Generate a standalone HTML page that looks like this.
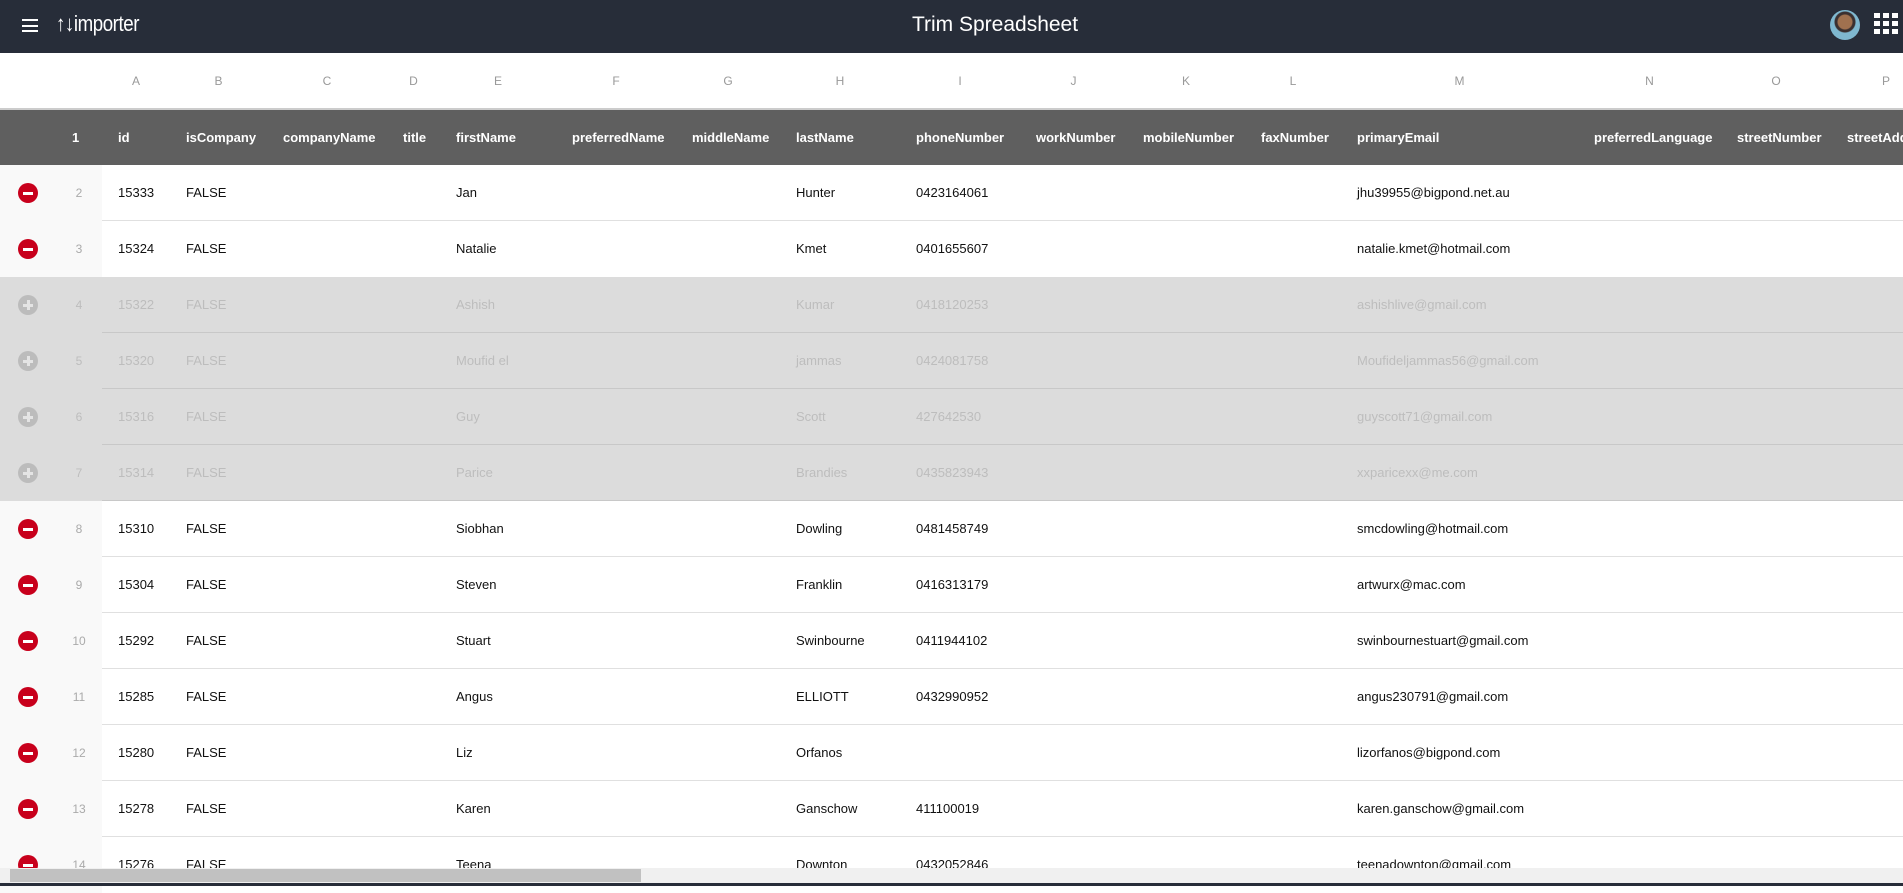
<!DOCTYPE html>
<html><head><meta charset="utf-8"><style>
*{margin:0;padding:0;box-sizing:border-box}
body{width:1903px;height:886px;overflow:hidden;background:#fff;font-family:"Liberation Sans",sans-serif;position:relative}
.top{position:absolute;left:0;top:0;width:1903px;height:53px;background:#272d39;color:#fff}
.ham{position:absolute;left:22px;top:19px;width:16px;height:13px}
.ham i{display:block;height:2px;background:#fff;margin-bottom:3.5px}
.logo{position:absolute;left:56px;top:11px;font-size:22px;letter-spacing:-0.5px;transform:scaleX(.85);transform-origin:left}
.title{position:absolute;left:895px;top:13px;width:200px;text-align:center;font-size:21px}
.av{position:absolute;left:1830px;top:10px;width:30px;height:30px;border-radius:50%;background:radial-gradient(circle at 50% 40%,#a0714f 0 7px,#3a3030 8px 10px,#7fb8d0 11px)}
.grid{position:absolute;left:1874px;top:13px;width:26px;height:24px}
.grid i{position:absolute;width:6px;height:5px;background:#fff}
.tbl{position:absolute;left:0;top:53px}
.r{position:absolute;left:0;width:1903px;height:56px;font-size:13px;color:#111}
.c{position:absolute;top:0;height:56px;line-height:56px;white-space:nowrap}
.let .c{color:#999;font-size:12px;text-align:center}
.hd{background:#5f5f5f;color:#fff;font-weight:bold;font-size:13px}
.g{position:absolute;left:0;top:0;width:102px;height:56px;background:#f9f9f9}
.sep{position:absolute;left:102px;right:0;bottom:0;height:1px;background:#e0e0e0}
.ic{position:absolute;left:18px;top:18px;width:20px;height:20px;border-radius:50%;background:#c8001c}
.ic:after{content:"";position:absolute;left:5px;top:8.5px;width:10px;height:3px;background:#fff}
.num{position:absolute;left:60px;width:38px;text-align:center;line-height:56px;color:#aaa;font-size:12px}
.dis{background:#dcdcdc;color:#bdbdbd}
.dis .g{background:#dcdcdc}
.dis .sep{background:#c8c8c8}
.dis .ic{background:#bcbcbc}
.dis .ic:before{content:"";position:absolute;left:8.5px;top:5px;width:3px;height:10px;background:#e4e4e4}
.dis .ic:after{background:#e4e4e4}
.dis .num{color:#bdbdbd}
.sb{position:absolute;left:0;top:868px;width:1903px;height:15px;background:#f0f0f0}
.th{position:absolute;left:10px;top:1px;width:631px;height:13px;background:#c1c1c1}
.bot{position:absolute;left:0;top:883px;width:1903px;height:3px;background:#272d39}
</style></head><body>
<div class="top">
<div class="ham"><i></i><i></i><i></i></div>
<div class="logo">↑↓importer</div>
<div class="title">Trim Spreadsheet</div>
<div class="av"></div>
<div class="grid">
<i style="left:0;top:0"></i><i style="left:9px;top:0"></i><i style="left:18px;top:0"></i>
<i style="left:0;top:8px"></i><i style="left:9px;top:8px"></i><i style="left:18px;top:8px"></i>
<i style="left:0;top:16px"></i><i style="left:9px;top:16px"></i><i style="left:18px;top:16px"></i>
</div>
</div>
<div class="r let" style="top:53px;height:55px">
<div class="c" style="left:102px;width:68px">A</div><div class="c" style="left:170px;width:97px">B</div><div class="c" style="left:267px;width:120px">C</div><div class="c" style="left:387px;width:53px">D</div><div class="c" style="left:440px;width:116px">E</div><div class="c" style="left:556px;width:120px">F</div><div class="c" style="left:676px;width:104px">G</div><div class="c" style="left:780px;width:120px">H</div><div class="c" style="left:900px;width:120px">I</div><div class="c" style="left:1020px;width:107px">J</div><div class="c" style="left:1127px;width:118px">K</div><div class="c" style="left:1245px;width:96px">L</div><div class="c" style="left:1341px;width:237px">M</div><div class="c" style="left:1578px;width:143px">N</div><div class="c" style="left:1721px;width:110px">O</div><div class="c" style="left:1831px;width:110px">P</div>
</div>
<div class="r hd" style="top:108px;height:57px;border-top:2px solid #ccc">
<div class="c" style="left:72px">1</div><div class="c" style="left:118px">id</div><div class="c" style="left:186px">isCompany</div><div class="c" style="left:283px">companyName</div><div class="c" style="left:403px">title</div><div class="c" style="left:456px">firstName</div><div class="c" style="left:572px">preferredName</div><div class="c" style="left:692px">middleName</div><div class="c" style="left:796px">lastName</div><div class="c" style="left:916px">phoneNumber</div><div class="c" style="left:1036px">workNumber</div><div class="c" style="left:1143px">mobileNumber</div><div class="c" style="left:1261px">faxNumber</div><div class="c" style="left:1357px">primaryEmail</div><div class="c" style="left:1594px">preferredLanguage</div><div class="c" style="left:1737px">streetNumber</div><div class="c" style="left:1847px">streetAddress</div>
</div>

<div class="r" style="top:165px"><div class="g"></div><div class="ic"></div><div class="num">2</div><div class="c" style="left:118px">15333</div><div class="c" style="left:186px">FALSE</div><div class="c" style="left:456px">Jan</div><div class="c" style="left:796px">Hunter</div><div class="c" style="left:916px">0423164061</div><div class="c" style="left:1357px">jhu39955@bigpond.net.au</div><div class="sep"></div></div>
<div class="r" style="top:221px"><div class="g"></div><div class="ic"></div><div class="num">3</div><div class="c" style="left:118px">15324</div><div class="c" style="left:186px">FALSE</div><div class="c" style="left:456px">Natalie</div><div class="c" style="left:796px">Kmet</div><div class="c" style="left:916px">0401655607</div><div class="c" style="left:1357px">natalie.kmet@hotmail.com</div></div>
<div class="r dis" style="top:277px"><div class="g"></div><div class="ic"></div><div class="num">4</div><div class="c" style="left:118px">15322</div><div class="c" style="left:186px">FALSE</div><div class="c" style="left:456px">Ashish</div><div class="c" style="left:796px">Kumar</div><div class="c" style="left:916px">0418120253</div><div class="c" style="left:1357px">ashishlive@gmail.com</div><div class="sep"></div></div>
<div class="r dis" style="top:333px"><div class="g"></div><div class="ic"></div><div class="num">5</div><div class="c" style="left:118px">15320</div><div class="c" style="left:186px">FALSE</div><div class="c" style="left:456px">Moufid el</div><div class="c" style="left:796px">jammas</div><div class="c" style="left:916px">0424081758</div><div class="c" style="left:1357px">Moufideljammas56@gmail.com</div><div class="sep"></div></div>
<div class="r dis" style="top:389px"><div class="g"></div><div class="ic"></div><div class="num">6</div><div class="c" style="left:118px">15316</div><div class="c" style="left:186px">FALSE</div><div class="c" style="left:456px">Guy</div><div class="c" style="left:796px">Scott</div><div class="c" style="left:916px">427642530</div><div class="c" style="left:1357px">guyscott71@gmail.com</div><div class="sep"></div></div>
<div class="r dis" style="top:445px"><div class="g"></div><div class="ic"></div><div class="num">7</div><div class="c" style="left:118px">15314</div><div class="c" style="left:186px">FALSE</div><div class="c" style="left:456px">Parice</div><div class="c" style="left:796px">Brandies</div><div class="c" style="left:916px">0435823943</div><div class="c" style="left:1357px">xxparicexx@me.com</div><div class="sep"></div></div>
<div class="r" style="top:501px"><div class="g"></div><div class="ic"></div><div class="num">8</div><div class="c" style="left:118px">15310</div><div class="c" style="left:186px">FALSE</div><div class="c" style="left:456px">Siobhan</div><div class="c" style="left:796px">Dowling</div><div class="c" style="left:916px">0481458749</div><div class="c" style="left:1357px">smcdowling@hotmail.com</div><div class="sep"></div></div>
<div class="r" style="top:557px"><div class="g"></div><div class="ic"></div><div class="num">9</div><div class="c" style="left:118px">15304</div><div class="c" style="left:186px">FALSE</div><div class="c" style="left:456px">Steven</div><div class="c" style="left:796px">Franklin</div><div class="c" style="left:916px">0416313179</div><div class="c" style="left:1357px">artwurx@mac.com</div><div class="sep"></div></div>
<div class="r" style="top:613px"><div class="g"></div><div class="ic"></div><div class="num">10</div><div class="c" style="left:118px">15292</div><div class="c" style="left:186px">FALSE</div><div class="c" style="left:456px">Stuart</div><div class="c" style="left:796px">Swinbourne</div><div class="c" style="left:916px">0411944102</div><div class="c" style="left:1357px">swinbournestuart@gmail.com</div><div class="sep"></div></div>
<div class="r" style="top:669px"><div class="g"></div><div class="ic"></div><div class="num">11</div><div class="c" style="left:118px">15285</div><div class="c" style="left:186px">FALSE</div><div class="c" style="left:456px">Angus</div><div class="c" style="left:796px">ELLIOTT</div><div class="c" style="left:916px">0432990952</div><div class="c" style="left:1357px">angus230791@gmail.com</div><div class="sep"></div></div>
<div class="r" style="top:725px"><div class="g"></div><div class="ic"></div><div class="num">12</div><div class="c" style="left:118px">15280</div><div class="c" style="left:186px">FALSE</div><div class="c" style="left:456px">Liz</div><div class="c" style="left:796px">Orfanos</div><div class="c" style="left:1357px">lizorfanos@bigpond.com</div><div class="sep"></div></div>
<div class="r" style="top:781px"><div class="g"></div><div class="ic"></div><div class="num">13</div><div class="c" style="left:118px">15278</div><div class="c" style="left:186px">FALSE</div><div class="c" style="left:456px">Karen</div><div class="c" style="left:796px">Ganschow</div><div class="c" style="left:916px">411100019</div><div class="c" style="left:1357px">karen.ganschow@gmail.com</div><div class="sep"></div></div>
<div class="r" style="top:837px"><div class="g"></div><div class="ic"></div><div class="num">14</div><div class="c" style="left:118px">15276</div><div class="c" style="left:186px">FALSE</div><div class="c" style="left:456px">Teena</div><div class="c" style="left:796px">Downton</div><div class="c" style="left:916px">0432052846</div><div class="c" style="left:1357px">teenadownton@gmail.com</div></div>
<div class="sb"><div class="th"></div></div>
<div class="bot"></div>
</body></html>
